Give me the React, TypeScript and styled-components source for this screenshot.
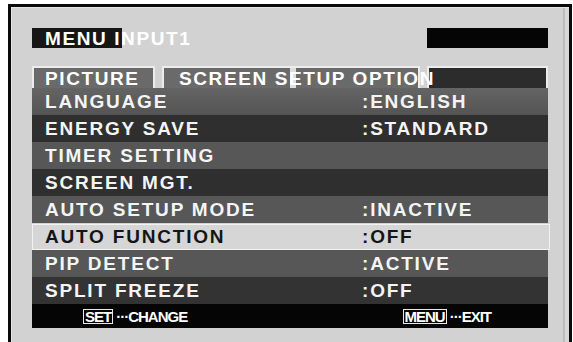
import styled, { createGlobalStyle } from 'styled-components';

const GlobalStyle = createGlobalStyle`
  html, body {
    margin: 0;
    padding: 0;
    background: #fff;
    overflow: hidden;
  }
  body {
    font-family: 'Liberation Sans', Arial, sans-serif;
  }
`;

const Screen = styled.div`
  margin: 4px 0 0 8px;
  width: 564px;
  height: 345px;
  border: 3px solid #0a0a0a;
  background: #d2d2d2;
  box-shadow: inset 1px 1px 0 #e4e4e4, inset -4px 0 0 #d8d8d8, inset -6px 0 0 #bdbdbd;
  padding: 21px 21px 0 21px;
  box-sizing: border-box;
  font-family: 'Liberation Sans', Arial, sans-serif;
  font-weight: 700;
`;

const TopBar = styled.div`
  display: flex;
  justify-content: space-between;
  height: 20px;
`;

const MenuLabel = styled.div`
  width: 260px;
  height: 20px;
  padding-left: 13px;
  box-sizing: border-box;
  background: linear-gradient(to right, #161616 0 90px, transparent 90px);
  color: #fff;
  font-size: 19px;
  letter-spacing: 1.6px;
  line-height: 21px;
  white-space: nowrap;
`;

const BlackBox = styled.div`
  width: 121px;
  height: 20px;
  background: #050505;
`;

const Tabs = styled.div`
  display: flex;
  gap: 7px;
  margin-top: 18px;
  height: 22px;
`;

const Tab = styled.div<{ $w: number; $pad: number; $dark?: boolean }>`
  width: ${({ $w }) => $w}px;
  height: 22px;
  box-sizing: border-box;
  border: 2px solid #ececec;
  border-bottom: none;
  padding-left: ${({ $pad }) => $pad}px;
  background: ${({ $dark }) => ($dark ? '#2c2c2c' : '#6a6a6a')};
  color: #fff;
  font-size: 19px;
  letter-spacing: 1.6px;
  line-height: 21px;
  white-space: nowrap;
  z-index: ${({ $dark }) => ($dark ? 0 : 1)};
`;

const SplitTab = styled(Tab)`
  background: linear-gradient(
    to right,
    #6a6a6a 0 126px,
    #dedede 126px 132px,
    #6a6a6a 132px
  );
`;

const List = styled.div`
  width: 516px;
  display: flex;
  flex-direction: column;
`;

const Row = styled.div<{ $bg: string; $active?: boolean }>`
  display: grid;
  grid-template-columns: 317px 1fr;
  padding-left: 13px;
  height: 27px;
  box-sizing: border-box;
  align-items: center;
  background: ${({ $bg }) => $bg};
  color: ${({ $active }) => ($active ? '#151515' : '#f4f4f4')};
  font-size: 19px;
  letter-spacing: 1.8px;
  white-space: nowrap;
  ${({ $active }) =>
    $active &&
    `
    border: 1px solid #f2f2f2;
    margin-top: 1px;
    height: 26px;
    width: 518px;
    padding-left: 12px;
  `}
`;

const Footer = styled.div`
  display: flex;
  align-items: center;
  height: 24px;
  width: 516px;
  background: #050505;
  padding: 0 57px 0 51px;
  box-sizing: border-box;
  color: #fff;
  font-size: 15px;
  letter-spacing: -1px;
`;

const Hint = styled.div<{ $right?: boolean }>`
  display: flex;
  align-items: center;
  gap: 3px;
  margin-left: ${({ $right }) => ($right ? 'auto' : '0')};
`;

const KeyBox = styled.span`
  border: 1px solid #e8e8e8;
  padding: 0 1px;
  line-height: 13px;
  height: 13px;
`;

const rows = [
  { label: 'LANGUAGE', value: ':ENGLISH', bg: 'linear-gradient(#646464, #545454)' },
  { label: 'ENERGY SAVE', value: ':STANDARD', bg: '#2f2f2f' },
  { label: 'TIMER SETTING', value: '', bg: '#575757' },
  { label: 'SCREEN MGT.', value: '', bg: '#2f2f2f' },
  { label: 'AUTO SETUP MODE', value: ':INACTIVE', bg: '#575757' },
  { label: 'AUTO FUNCTION', value: ':OFF', bg: '#d6d6d6', active: true },
  { label: 'PIP DETECT', value: ':ACTIVE', bg: '#575757' },
  { label: 'SPLIT FREEZE', value: ':OFF', bg: '#333333' },
];

export default function App() {
  return (
    <>
      <GlobalStyle />
      <Screen>
        <TopBar>
          <MenuLabel>MENU INPUT1</MenuLabel>
          <BlackBox />
        </TopBar>
        <Tabs>
          <Tab $w={123} $pad={11}>PICTURE</Tab>
          <SplitTab $w={258} $pad={15}>SCREEN SETUP OPTION</SplitTab>
          <Tab $w={121} $pad={0} $dark />
        </Tabs>
        <List>
          {rows.map((r) => (
            <Row key={r.label} $bg={r.bg} $active={r.active}>
              <span>{r.label}</span>
              <span>{r.value}</span>
            </Row>
          ))}
          <Footer>
            <Hint>
              <KeyBox>SET</KeyBox>
              <span>···CHANGE</span>
            </Hint>
            <Hint $right>
              <KeyBox>MENU</KeyBox>
              <span>···EXIT</span>
            </Hint>
          </Footer>
        </List>
      </Screen>
    </>
  );
}
